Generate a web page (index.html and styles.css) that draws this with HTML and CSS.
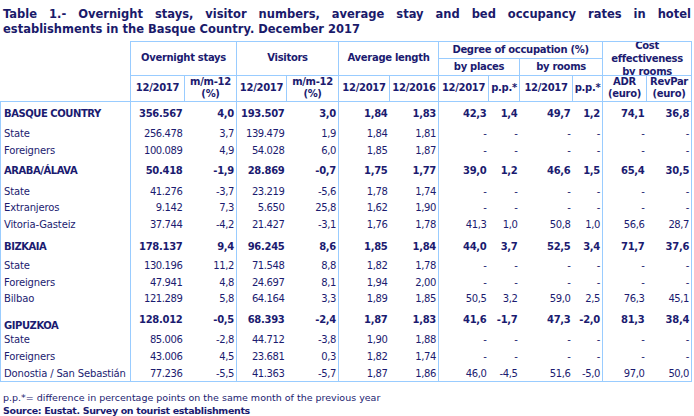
FILE: index.html
```html
<!DOCTYPE html>
<html lang="en">
<head>
<meta charset="utf-8">
<title>Table 1</title>
<link rel="stylesheet" href="styles.css">
</head>
<body>
<h1 class="title"><span class="l1">Table 1.- Overnight stays, visitor numbers, average stay and bed occupancy rates in hotel</span><span class="l2">establishments in the Basque Country. December 2017</span></h1>
<table class="tbl">
<colgroup>
<col class="c130"><col class="c54"><col class="c52"><col class="c50"><col class="c52"><col class="c51"><col class="c49"><col class="c50"><col class="c31"><col class="c53"><col class="c30"><col class="c44"><col class="c45">
</colgroup>
<thead>
<tr class="h1">
<th class="blank" rowspan="3"></th>
<th colspan="2" rowspan="2">Overnight stays</th>
<th colspan="2" rowspan="2">Visitors</th>
<th colspan="2" rowspan="2">Average length</th>
<th colspan="4">Degree of occupation (%)</th>
<th colspan="2" rowspan="2" class="cost"><div class="clip"><span>Cost</span><span>effectiveness</span><span>by rooms</span></div></th>
</tr>
<tr class="h2">
<th colspan="2">by places</th>
<th colspan="2">by rooms</th>
</tr>
<tr class="h3">
<th>12/2017</th><th>m/m-12<br>(%)</th>
<th>12/2017</th><th>m/m-12<br>(%)</th>
<th>12/2017</th><th>12/2016</th>
<th>12/2017</th><th>p.p.*</th>
<th>12/2017</th><th>p.p.*</th>
<th>ADR<br>(euro)</th><th>RevPar<br>(euro)</th>
</tr>
</thead>
<tbody>
<tr class="b r20"><td>BASQUE COUNTRY</td><td>356.567</td><td>4,0</td><td>193.507</td><td>3,0</td><td>1,84</td><td>1,83</td><td>42,3</td><td>1,4</td><td>49,7</td><td>1,2</td><td>74,1</td><td>36,8</td></tr>
<tr class="r20"><td>State</td><td>256.478</td><td>3,7</td><td>139.479</td><td>1,9</td><td>1,84</td><td>1,81</td><td>-</td><td>-</td><td>-</td><td>-</td><td>-</td><td>-</td></tr>
<tr class="r17"><td>Foreigners</td><td>100.089</td><td>4,9</td><td>54.028</td><td>6,0</td><td>1,85</td><td>1,87</td><td>-</td><td>-</td><td>-</td><td>-</td><td>-</td><td>-</td></tr>
<tr class="b r20"><td>ARABA/ÁLAVA</td><td>50.418</td><td>-1,9</td><td>28.869</td><td>-0,7</td><td>1,75</td><td>1,77</td><td>39,0</td><td>1,2</td><td>46,6</td><td>1,5</td><td>65,4</td><td>30,5</td></tr>
<tr class="r21"><td>State</td><td>41.276</td><td>-3,7</td><td>23.219</td><td>-5,6</td><td>1,78</td><td>1,74</td><td>-</td><td>-</td><td>-</td><td>-</td><td>-</td><td>-</td></tr>
<tr class="r16"><td>Extranjeros</td><td>9.142</td><td>7,3</td><td>5.650</td><td>25,8</td><td>1,62</td><td>1,90</td><td>-</td><td>-</td><td>-</td><td>-</td><td>-</td><td>-</td></tr>
<tr class="r17"><td>Vitoria-Gasteiz</td><td>37.744</td><td>-4,2</td><td>21.427</td><td>-3,1</td><td>1,76</td><td>1,78</td><td>41,3</td><td>1,0</td><td>50,8</td><td>1,0</td><td>56,6</td><td>28,7</td></tr>
<tr class="b r22"><td>BIZKAIA</td><td>178.137</td><td>9,4</td><td>96.245</td><td>8,6</td><td>1,85</td><td>1,84</td><td>44,0</td><td>3,7</td><td>52,5</td><td>3,4</td><td>71,7</td><td>37,6</td></tr>
<tr class="r19"><td>State</td><td>130.196</td><td>11,2</td><td>71.548</td><td>8,8</td><td>1,82</td><td>1,78</td><td>-</td><td>-</td><td>-</td><td>-</td><td>-</td><td>-</td></tr>
<tr class="r17"><td>Foreigners</td><td>47.941</td><td>4,8</td><td>24.697</td><td>8,1</td><td>1,94</td><td>2,00</td><td>-</td><td>-</td><td>-</td><td>-</td><td>-</td><td>-</td></tr>
<tr class="r16"><td>Bilbao</td><td>121.289</td><td>5,8</td><td>64.164</td><td>3,3</td><td>1,89</td><td>1,85</td><td>50,5</td><td>3,2</td><td>59,0</td><td>2,5</td><td>76,3</td><td>45,1</td></tr>
<tr class="b r26 gip"><td>GIPUZKOA</td><td>128.012</td><td>-0,5</td><td>68.393</td><td>-2,4</td><td>1,87</td><td>1,83</td><td>41,6</td><td>-1,7</td><td>47,3</td><td>-2,0</td><td>81,3</td><td>38,4</td></tr>
<tr class="r15"><td>State</td><td>85.006</td><td>-2,8</td><td>44.712</td><td>-3,8</td><td>1,90</td><td>1,88</td><td>-</td><td>-</td><td>-</td><td>-</td><td>-</td><td>-</td></tr>
<tr class="r17"><td>Foreigners</td><td>43.006</td><td>4,5</td><td>23.681</td><td>0,3</td><td>1,82</td><td>1,74</td><td>-</td><td>-</td><td>-</td><td>-</td><td>-</td><td>-</td></tr>
<tr class="r17"><td>Donostia / San Sebastián</td><td>77.236</td><td>-5,5</td><td>41.363</td><td>-5,7</td><td>1,87</td><td>1,86</td><td>46,0</td><td>-4,5</td><td>51,6</td><td>-5,0</td><td>97,0</td><td>50,0</td></tr>
</tbody>
</table>
<p class="note">p.p.*= difference in percentage points on the same month of the previous year</p>
<p class="src">Source: Eustat. Survey on tourist establishments</p>
</body>
</html>
```
FILE: styles.css
```css
* { box-sizing: border-box; }
body {
  margin: 0;
  width: 694px;
  background: #ffffff;
  color: #1b1b70;
  font-family: "DejaVu Sans", Verdana, sans-serif;
  font-size: 10px;
}
.title {
  margin: 0;
  padding: 7px 3px 0 3px;
  font-size: 11.5px;
  line-height: 14.5px;
  font-weight: bold;
  color: #1a1a6a;
}
.title .l1 { display: block; text-align: justify; text-align-last: justify; }
.title .l2 { display: block; }

.tbl {
  border-collapse: collapse;
  table-layout: fixed;
  width: 692px;
  margin-top: 5px;
}
.c130 { width: 130px; } .c54 { width: 54px; } .c52 { width: 52px; } .c50 { width: 50px; }
.c51 { width: 51px; } .c49 { width: 49px; } .c31 { width: 31px; } .c53 { width: 53px; }
.c30 { width: 30px; } .c44 { width: 44px; } .c45 { width: 45px; }

.tbl th {
  border: 1px solid #99ccff;
  padding: 0;
  font-weight: bold;
  line-height: 12.4px;
  text-align: center;
  vertical-align: middle;
  letter-spacing: -0.3px;
  white-space: nowrap;
}
.tbl th.blank { border: none; }
.h1 th { height: 17px; }
.h2 th { height: 17px; }
.h3 th { height: 25px; }
.tbl th.cost { overflow: hidden; }
.clip {
  height: 33px;
  overflow: hidden;
  display: flex;
  flex-direction: column;
  justify-content: center;
  align-items: center;
  line-height: 13px;
}
.clip span { display: block; flex: none; }

.tbl td {
  padding: 0 2px 1px 3px;
  line-height: 12px;
  vertical-align: bottom;
  text-align: right;
  white-space: nowrap;
  letter-spacing: -0.4px;
}
.tbl td:first-child { text-align: left; letter-spacing: -0.15px; }
.tbl tr.b td:first-child { letter-spacing: -0.45px; }
.tbl tr.b td { font-weight: bold; letter-spacing: -0.3px; }
.tbl td:nth-child(1), .tbl td:nth-child(2), .tbl td:nth-child(4),
.tbl td:nth-child(6), .tbl td:nth-child(8), .tbl td:nth-child(12) { border-left: 1px solid #99ccff; }
.tbl td:last-child { border-right: 1px solid #99ccff; }
.tbl tbody tr:first-child td { border-top: 1px solid #99ccff; }
.tbl tbody tr:last-child td { border-bottom: 1px solid #99ccff; }

.r15 td { height: 15px; }
.r16 td { height: 16px; }
.r17 td { height: 17px; }
.r19 td { height: 19px; }
.r20 td { height: 20px; }
.r21 td { height: 21px; }
.r22 td { height: 22px; }
.r26 td { height: 26px; }
.gip td { padding-bottom: 6px; }
.gip td:first-child { padding-bottom: 0; }

.note {
  margin: 9px 0 0 0;
  padding: 0 3px;
  font-size: 9.5px;
  line-height: 13px;
}
.src {
  margin: 0;
  padding: 0 3px;
  font-size: 9.5px;
  line-height: 13px;
  font-weight: bold;
  letter-spacing: -0.35px;
}
```
